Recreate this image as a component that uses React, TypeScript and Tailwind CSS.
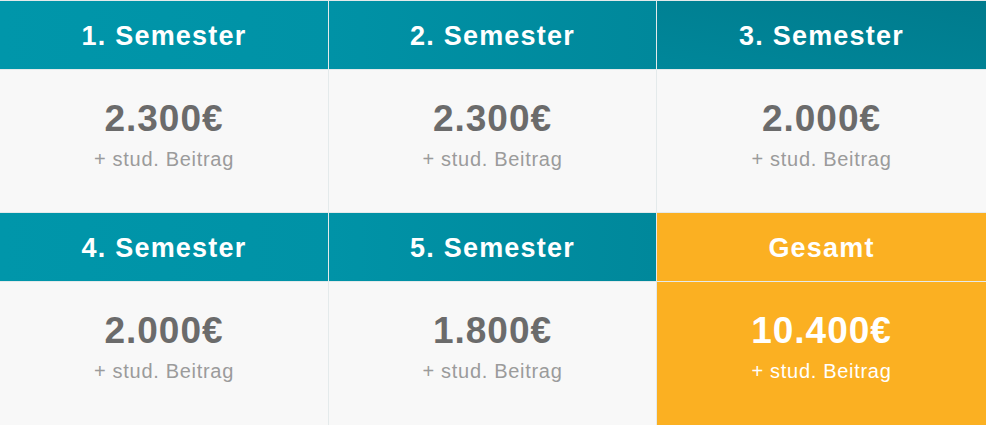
const font = { fontFamily: '"Liberation Sans", Arial, Helvetica, sans-serif' };

type Cell = { title: string; price: string; head: string; body: string; total?: boolean };

const rows: Cell[][] = [
  [
    { title: '1. Semester', price: '2.300€', head: 'bg-gradient-to-r from-[#0096aa] to-[#0092a6]', body: 'bg-[#f8f8f8]' },
    { title: '2. Semester', price: '2.300€', head: 'bg-gradient-to-r from-[#0092a6] to-[#00889b]', body: 'bg-[#f8f8f8]' },
    { title: '3. Semester', price: '2.000€', head: 'bg-gradient-to-tr from-[#00879a] to-[#007b8d]', body: 'bg-[#f8f8f8]' },
  ],
  [
    { title: '4. Semester', price: '2.000€', head: 'bg-gradient-to-r from-[#0096aa] to-[#0092a6]', body: 'bg-[#f8f8f8]' },
    { title: '5. Semester', price: '1.800€', head: 'bg-gradient-to-r from-[#0093a7] to-[#00889b]', body: 'bg-[#f8f8f8]' },
    { title: 'Gesamt', price: '10.400€', head: 'bg-[#fbb022]', body: 'bg-[#fbb022]', total: true },
  ],
];

function Header({ cell }: { cell: Cell }) {
  return (
    <div className={`flex h-[68px] items-center justify-center pt-[2px] ${cell.head}`}>
      <span className="text-[27px] font-bold tracking-[1.2px] text-white">{cell.title}</span>
    </div>
  );
}

function Body({ cell, tall }: { cell: Cell; tall?: boolean }) {
  return (
    <div className={`flex flex-col items-center pt-[29px] ${tall ? 'h-[143px]' : 'h-[142px]'} ${cell.body}`}>
      <span className={`text-[37px] leading-[40px] font-bold tracking-[1px] ${cell.total ? 'text-white' : 'text-[#6b6b6b]'}`}>
        {cell.price}
      </span>
      <span className={`mt-[8px] text-[20px] leading-[24px] tracking-[0.7px] ${cell.total ? 'text-white' : 'text-[#9b9b9b]'}`}>
        + stud. Beitrag
      </span>
    </div>
  );
}

export default function App() {
  return (
    <div style={font} className="h-[426px] w-[986px] overflow-hidden bg-white">
      <div className="grid grid-cols-[328px_327px_1fr] gap-px bg-[#e4eaeb] pt-px">
        {rows[0].map((c) => (
          <Header key={c.title} cell={c} />
        ))}
        {rows[0].map((c) => (
          <Body key={c.title} cell={c} />
        ))}
        {rows[1].map((c) => (
          <Header key={c.title} cell={c} />
        ))}
        {rows[1].map((c) => (
          <Body key={c.title} cell={c} tall />
        ))}
      </div>
    </div>
  );
}
